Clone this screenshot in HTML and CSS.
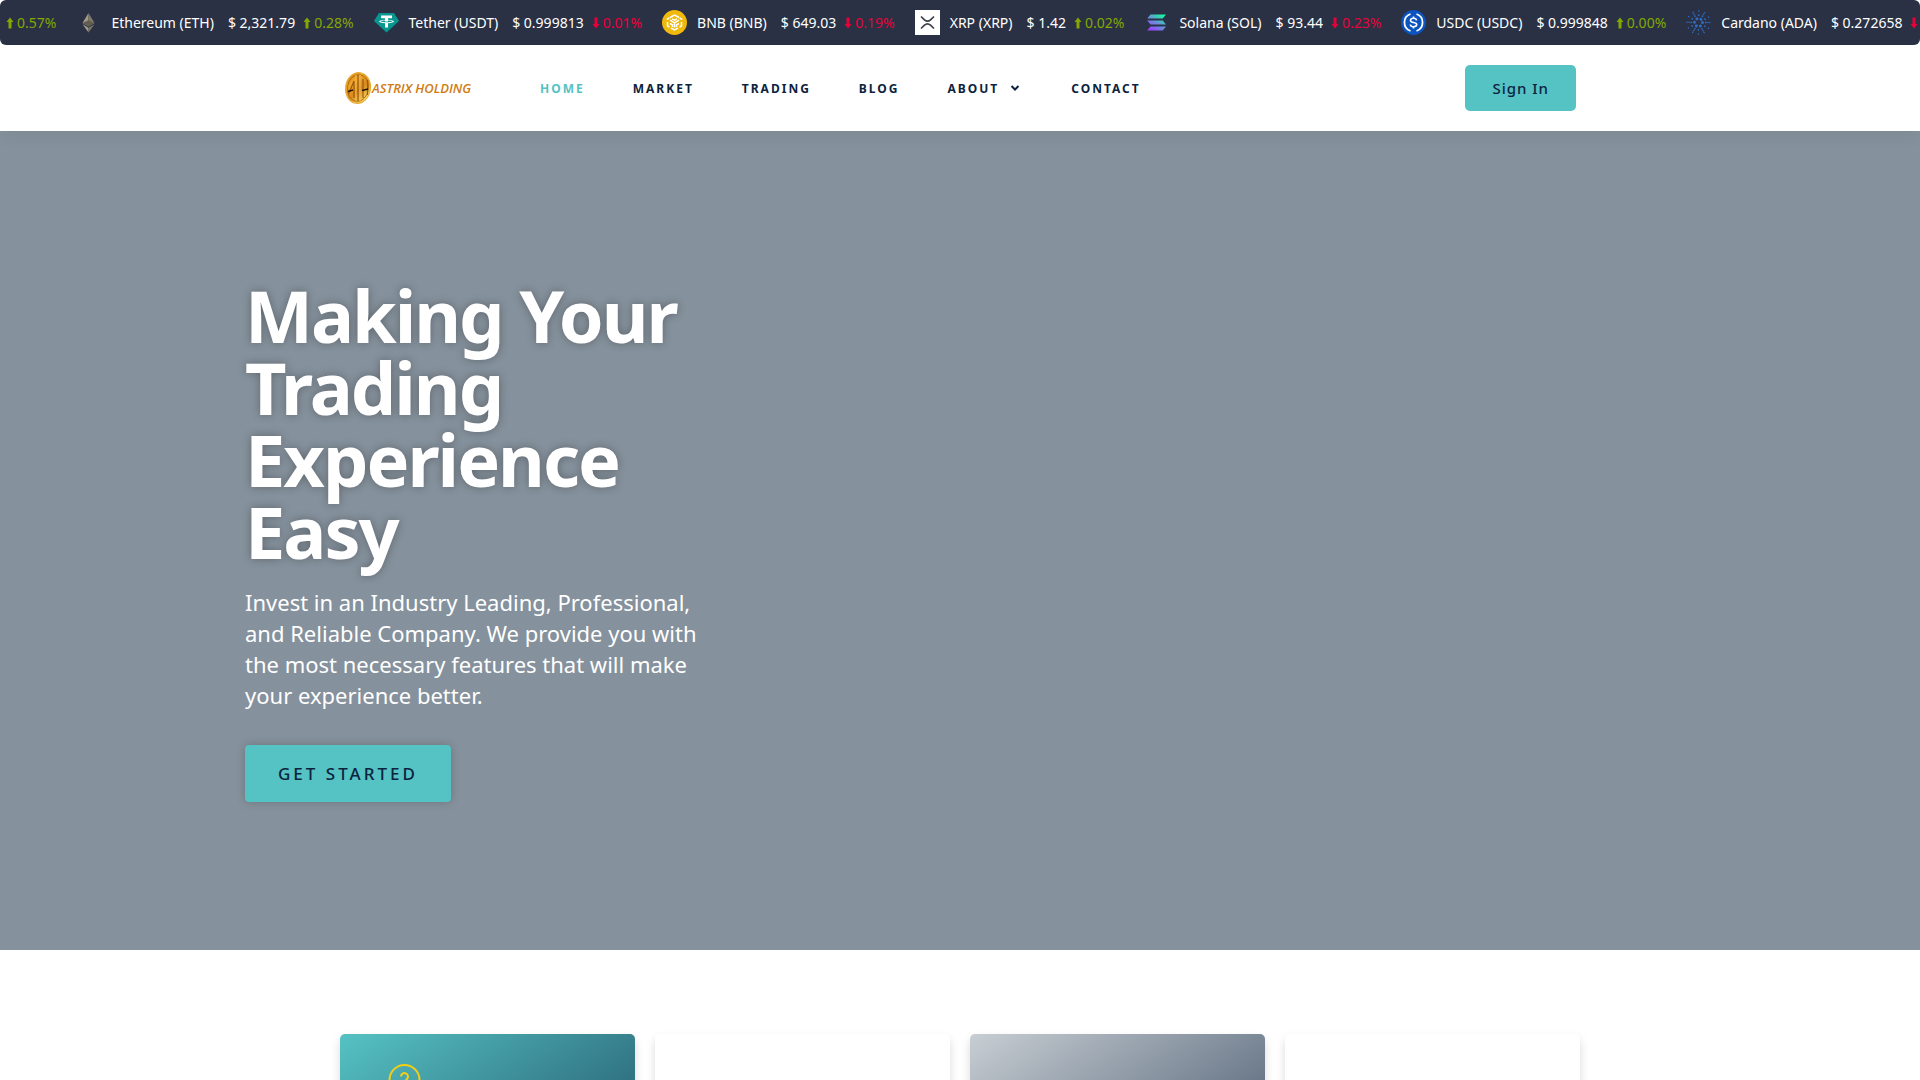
FILE: index.html
```html
<!DOCTYPE html>
<html lang="en">

<head>
    <meta charset="UTF-8">
    <meta name="viewport" content="width=device-width, initial-scale=1.0">
    <title>Astrix Holding</title>
    <link rel="stylesheet" href="styles.css">
</head>

<body>
    <!-- Price ticker -->
    <div class="ticker">
        <div class="coin">
            <span class="change up"><svg class="arrow" viewBox="0 0 8 12"><path d="M4 .5L7.500 5H5.500v6.500h-3V5H.5z"/></svg>0.57%</span>
        </div>
        <div class="coin">
            <svg class="coin-icon" viewBox="0 0 25 25">
                <path d="M12.500 3L6.500 13l6 3.500z" fill="#a19a84"/>
                <path d="M12.500 3l6 10-6 3.500z" fill="#7f7968"/>
                <path d="M6.500 13l6-2.700 6 2.700-6 3.500z" fill="#625d50"/>
                <path d="M6.500 14.300l6 3.500v4.700z" fill="#a39c86"/>
                <path d="M18.500 14.300l-6 3.500v4.700z" fill="#7d7767"/>
            </svg>
            <span class="name">Ethereum (ETH)</span>
            <span class="price">$ 2,321.79</span>
            <span class="change up"><svg class="arrow" viewBox="0 0 8 12"><path d="M4 .5L7.500 5H5.500v6.500h-3V5H.5z"/></svg>0.28%</span>
        </div>
        <div class="coin">
            <svg class="coin-icon" viewBox="0 0 25 25">
                <path d="M5 3h15l5 8-12.500 11.500L0 11z" fill="#0a9690"/>
                <path d="M7 5.500h11v2.700h-4v1.600c3.500.2 6 .9 6 1.700s-2.500 1.500-6 1.700v4.300h-3v-4.300c-3.500-.2-6-.9-6-1.700s2.500-1.500 6-1.700V8.200H7z" fill="#fff"/>
                <path d="M6.500 11.300c1 .7 3.300 1 6 1s5-.3 6-1c-.8-.5-2.300-.8-4.500-.9v1h-3v-1c-2.200.1-3.700.4-4.500.9z" fill="#0a9690"/>
            </svg>
            <span class="name">Tether (USDT)</span>
            <span class="price">$ 0.999813</span>
            <span class="change down"><svg class="arrow" viewBox="0 0 8 12"><path d="M4 11.500L7.500 7h-2V.5h-3V7h-2z"/></svg>0.01%</span>
        </div>
        <div class="coin">
            <svg class="coin-icon" viewBox="0 0 25 25">
                <circle cx="12.500" cy="12.500" r="12.500" fill="#f0b90b"/>
                <g fill="none" stroke="#fff" stroke-width="1.500">
                    <path d="M8 7.500l4.500-2.500 4.500 2.500M5.500 10V9l2-1.200M19.500 10V9l-2-1.200M5.500 12v4l2 1.200M19.500 12v4l-2 1.200M9 18l3.500 2 3.500-2"/>
                    <path d="M8 10.200l4.500 2.600 4.500-2.600M12.500 12.500v5M8 13.500l2.500 1.500v2M17 13.500L14.500 15v2M10 8.800l2.500 1.400L15 8.800"/>
                </g>
            </svg>
            <span class="name">BNB (BNB)</span>
            <span class="price">$ 649.03</span>
            <span class="change down"><svg class="arrow" viewBox="0 0 8 12"><path d="M4 11.500L7.500 7h-2V.5h-3V7h-2z"/></svg>0.19%</span>
        </div>
        <div class="coin">
            <svg class="coin-icon" viewBox="0 0 25 25">
                <path d="M0 0h25v25H0z" fill="#fff"/>
                <path d="M6 6.500l3.500 3.400q3 2.600 6 0L19 6.500M6 18.500l3.500-3.400q3-2.600 6 0l3.500 3.400" fill="none" stroke="#3a4148" stroke-width="1.700"/>
            </svg>
            <span class="name">XRP (XRP)</span>
            <span class="price">$ 1.42</span>
            <span class="change up"><svg class="arrow" viewBox="0 0 8 12"><path d="M4 .5L7.500 5H5.500v6.500h-3V5H.5z"/></svg>0.02%</span>
        </div>
        <div class="coin">
            <svg class="coin-icon" viewBox="0 0 25 25">
                <defs>
                    <linearGradient id="sol" gradientUnits="userSpaceOnUse" x1="6" y1="22" x2="19" y2="3">
                        <stop offset="0.100" stop-color="#9945ff"/>
                        <stop offset="0.500" stop-color="#6a8fd8"/>
                        <stop offset="0.900" stop-color="#19f5a0"/>
                    </linearGradient>
                </defs>
                <path d="M6.500 4.500H22l-3.300 4H3.200zM3.200 10.500h15.500l3.300 4H6.500zM6.500 16.500H22l-3.300 4H3.200z" fill="url(#sol)"/>
            </svg>
            <span class="name">Solana (SOL)</span>
            <span class="price">$ 93.44</span>
            <span class="change down"><svg class="arrow" viewBox="0 0 8 12"><path d="M4 11.500L7.500 7h-2V.5h-3V7h-2z"/></svg>0.23%</span>
        </div>
        <div class="coin">
            <svg class="coin-icon" viewBox="0 0 25 25">
                <circle cx="12.500" cy="12.500" r="12.500" fill="#0b53bf"/>
                <path d="M9.500 4A9 9 0 0 0 9.500 21M15.500 4a9 9 0 0 1 0 17" fill="none" stroke="#fff" stroke-width="1.800"/>
                <path d="M15.500 10.300c-.2-1.500-1.400-2-3-2s-3 .7-3 2.100c0 3.200 6.200 1 6.200 4.200 0 1.400-1.400 2.200-3.200 2.200s-3-.8-3.200-2.300M12.500 6.500v2M12.500 16.500v2" fill="none" stroke="#fff" stroke-width="1.600"/>
            </svg>
            <span class="name">USDC (USDC)</span>
            <span class="price">$ 0.999848</span>
            <span class="change up"><svg class="arrow" viewBox="0 0 8 12"><path d="M4 .5L7.500 5H5.500v6.500h-3V5H.5z"/></svg>0.00%</span>
        </div>
        <div class="coin">
            <svg class="coin-icon" viewBox="0 0 25 25" fill="none" stroke="#2f6cc0" stroke-linecap="round">
                <circle cx="12.500" cy="12.500" r="4" stroke-width="3" stroke-dasharray="0.010 4.179"/>
                <circle cx="12.500" cy="12.500" r="7.300" stroke-width="1.800" stroke-dasharray="0.010 3.812"/>
                <circle cx="12.500" cy="12.500" r="9.500" stroke-width="1.600" stroke-dasharray="0.010 9.938"/>
                <circle cx="12.500" cy="12.500" r="11.500" stroke-width="1.500" stroke-dasharray="0.010 6.011"/>
            </svg>
            <span class="name">Cardano (ADA)</span>
            <span class="price">$ 0.272658</span>
            <span class="change down"><svg class="arrow" viewBox="0 0 8 12"><path d="M4 11.500L7.500 7h-2V.5h-3V7h-2z"/></svg>0.41%</span>
        </div>
    </div>

    <!-- Navigation -->
    <header class="header">
        <div class="container header-inner">
            <a class="logo" href="#">
                <svg class="logo-mark" viewBox="0 0 28 34">
                    <defs>
                        <linearGradient id="gold" x1="0" y1="0" x2="1" y2="1">
                            <stop offset="0" stop-color="#c87508"/>
                            <stop offset="0.300" stop-color="#f0a72c"/>
                            <stop offset="0.550" stop-color="#d98a1c"/>
                            <stop offset="0.850" stop-color="#f6d862"/>
                            <stop offset="1" stop-color="#a85b08"/>
                        </linearGradient>
                    </defs>
                    <g transform="rotate(8 14 17)">
                        <ellipse cx="14" cy="17" rx="12.500" ry="15.500" fill="url(#gold)" stroke="#e5ad35"/>
                        <ellipse cx="14" cy="17" rx="10.500" ry="13.500" fill="none" stroke="#a9630e" stroke-width="0.800"/>
                    </g>
                    <path d="M4.500 23L10 10v17M14 4v26M19 8v19M23.500 9v15" fill="none" stroke="#9a5a10" stroke-width="1.200"/>
                    <path d="M12 3.500v27M16 3.500v27" stroke="#f4b84a"/>
                    <path d="M4 20.500l5-1.500M18 19.500l6-1.500" stroke="#251304" stroke-width="1.500"/>
                </svg>
                <span class="logo-text">ASTRIX HOLDING</span>
            </a>
            <nav class="menu">
                <a class="active" href="#">Home</a>
                <a href="#">Market</a>
                <a href="#">Trading</a>
                <a href="#">Blog</a>
                <a href="#">About
                    <svg class="chevron" viewBox="0 0 10 6"><path d="M1.500 1L5 4.500 8.500 1"/></svg>
                </a>
                <a href="#">Contact</a>
            </nav>
            <button class="sign-in" type="button">Sign In</button>
        </div>
    </header>

    <!-- Hero -->
    <section class="hero">
        <div class="hero-content">
            <h1>Making Your Trading Experience Easy</h1>
            <p>Invest in an Industry Leading, Professional, and Reliable Company. We provide you with the most necessary features that will make your experience better.</p>
            <a class="get-started" href="#">Get Started</a>
        </div>
    </section>

    <!-- Feature cards -->
    <section class="features">
        <div class="container cards">
            <div class="card card-teal">
                <svg class="card-icon" viewBox="0 0 64 64">
                    <circle cx="16.500" cy="16" r="15"/>
                    <path d="M13 12.500a3.500 3.500 0 1 1 6 2.500c-1.500 1.500-2.500 2-2.500 4.500M16.500 22.500v1"/>
                </svg>
            </div>
            <div class="card"></div>
            <div class="card card-grey"></div>
            <div class="card"></div>
        </div>
    </section>
</body>

</html>
```
FILE: styles.css
```css
* {
    box-sizing: border-box;
}

body {
    margin: 0;
    background-color: #fff;
    color: #0c2340;
    font-family: "Noto Sans", sans-serif;
}

a {
    color: inherit;
    text-decoration: none;
}

.container {
    width: 100%;
    max-width: 1280px;
    margin: 0 auto;
    padding: 0 20px;
}

/* Ticker */
.ticker {
    display: flex;
    align-items: center;
    gap: 20px;
    height: 45px;
    padding-left: 6px;
    overflow: hidden;
    border-radius: 6px;
    background-color: #2a3145;
    color: #fff;
    font-size: 14px;
    white-space: nowrap;
}

.coin {
    display: flex;
    flex-shrink: 0;
    align-items: center;
}

.coin-icon {
    width: 25px;
    height: 25px;
    margin-right: 10px;
}

.price {
    margin: 0 8px 0 14px;
}

.change {
    display: flex;
    align-items: center;
    gap: 3px;
}

.arrow {
    width: 8px;
    height: 12px;
    fill: currentColor;
}

.up {
    color: #84a800;
}

.down {
    color: #ea0038;
}

/* Header */
.header {
    position: relative;
    padding: 20px 0;
    background-color: #fff;
    box-shadow: 0 6px 15px rgba(0, 0, 0, 0.05);
}

.header-inner {
    display: flex;
    align-items: center;
    padding: 0 24px;
}

.logo {
    display: flex;
    align-items: center;
    width: 126px;
}

.logo-mark {
    flex-shrink: 0;
    width: 28px;
    height: 34px;
}

.logo-text {
    color: #cf7c12;
    font-family: "Open Sans", sans-serif;
    font-size: 13px;
    font-style: italic;
    font-weight: 600;
    white-space: nowrap;
}

.menu {
    display: flex;
    flex: 1;
    gap: 48px;
    margin-left: 70px;
    font-size: 12px;
    font-weight: 700;
    letter-spacing: 2px;
    text-transform: uppercase;
}

.menu a {
    display: flex;
    align-items: center;
}

.menu .active {
    color: #55c2c3;
}

.chevron {
    width: 10px;
    height: 6px;
    margin: 0 3px 0 11px;
    fill: none;
    stroke: currentColor;
    stroke-width: 2;
}

.sign-in {
    padding: 12px 27px;
    border: 0;
    border-radius: 5px;
    background-color: #55c2c3;
    color: #0c2340;
    font: 500 15px/22px "Noto Sans", sans-serif;
    letter-spacing: 1px;
    cursor: pointer;
}

/* Hero */
.hero {
    padding: 148px 245px;
    background-color: #85919c;
    color: #fff;
}

.hero-content {
    max-width: 480px;
}

.hero h1 {
    margin: 0 0 20px;
    font-size: 72px;
    font-weight: 700;
    line-height: 72px;
    letter-spacing: -2px;
    text-shadow: 0 0 10px rgba(0, 0, 0, 0.3);
}

.hero p {
    margin: 0 0 34px;
    font-size: 22px;
    line-height: 31px;
}

.get-started {
    display: inline-block;
    padding: 16px 33px;
    border-radius: 4px;
    background-color: #55c2c3;
    box-shadow: 0 0 10px rgba(0, 0, 0, 0.2);
    color: #0c2340;
    font-size: 17px;
    font-weight: 500;
    line-height: 25px;
    letter-spacing: 3px;
    text-transform: uppercase;
}

/* Feature cards */
.features {
    padding: 84px 0;
}

.cards {
    display: grid;
    grid-template-columns: repeat(4, 1fr);
    gap: 20px;
}

.card {
    min-height: 300px;
    padding: 30px 48px;
    border-radius: 5px;
    background-color: #fff;
    box-shadow: 0 5px 10px rgba(0, 0, 0, 0.15);
}

.card-teal {
    background: linear-gradient(145deg, #55c2c3, #0c2340);
}

.card-grey {
    background: linear-gradient(145deg, #c8ced3, #0c2340);
}

.card-icon {
    width: 64px;
    height: 64px;
    fill: none;
    stroke: #f7ce13;
    stroke-width: 2;
}
```
